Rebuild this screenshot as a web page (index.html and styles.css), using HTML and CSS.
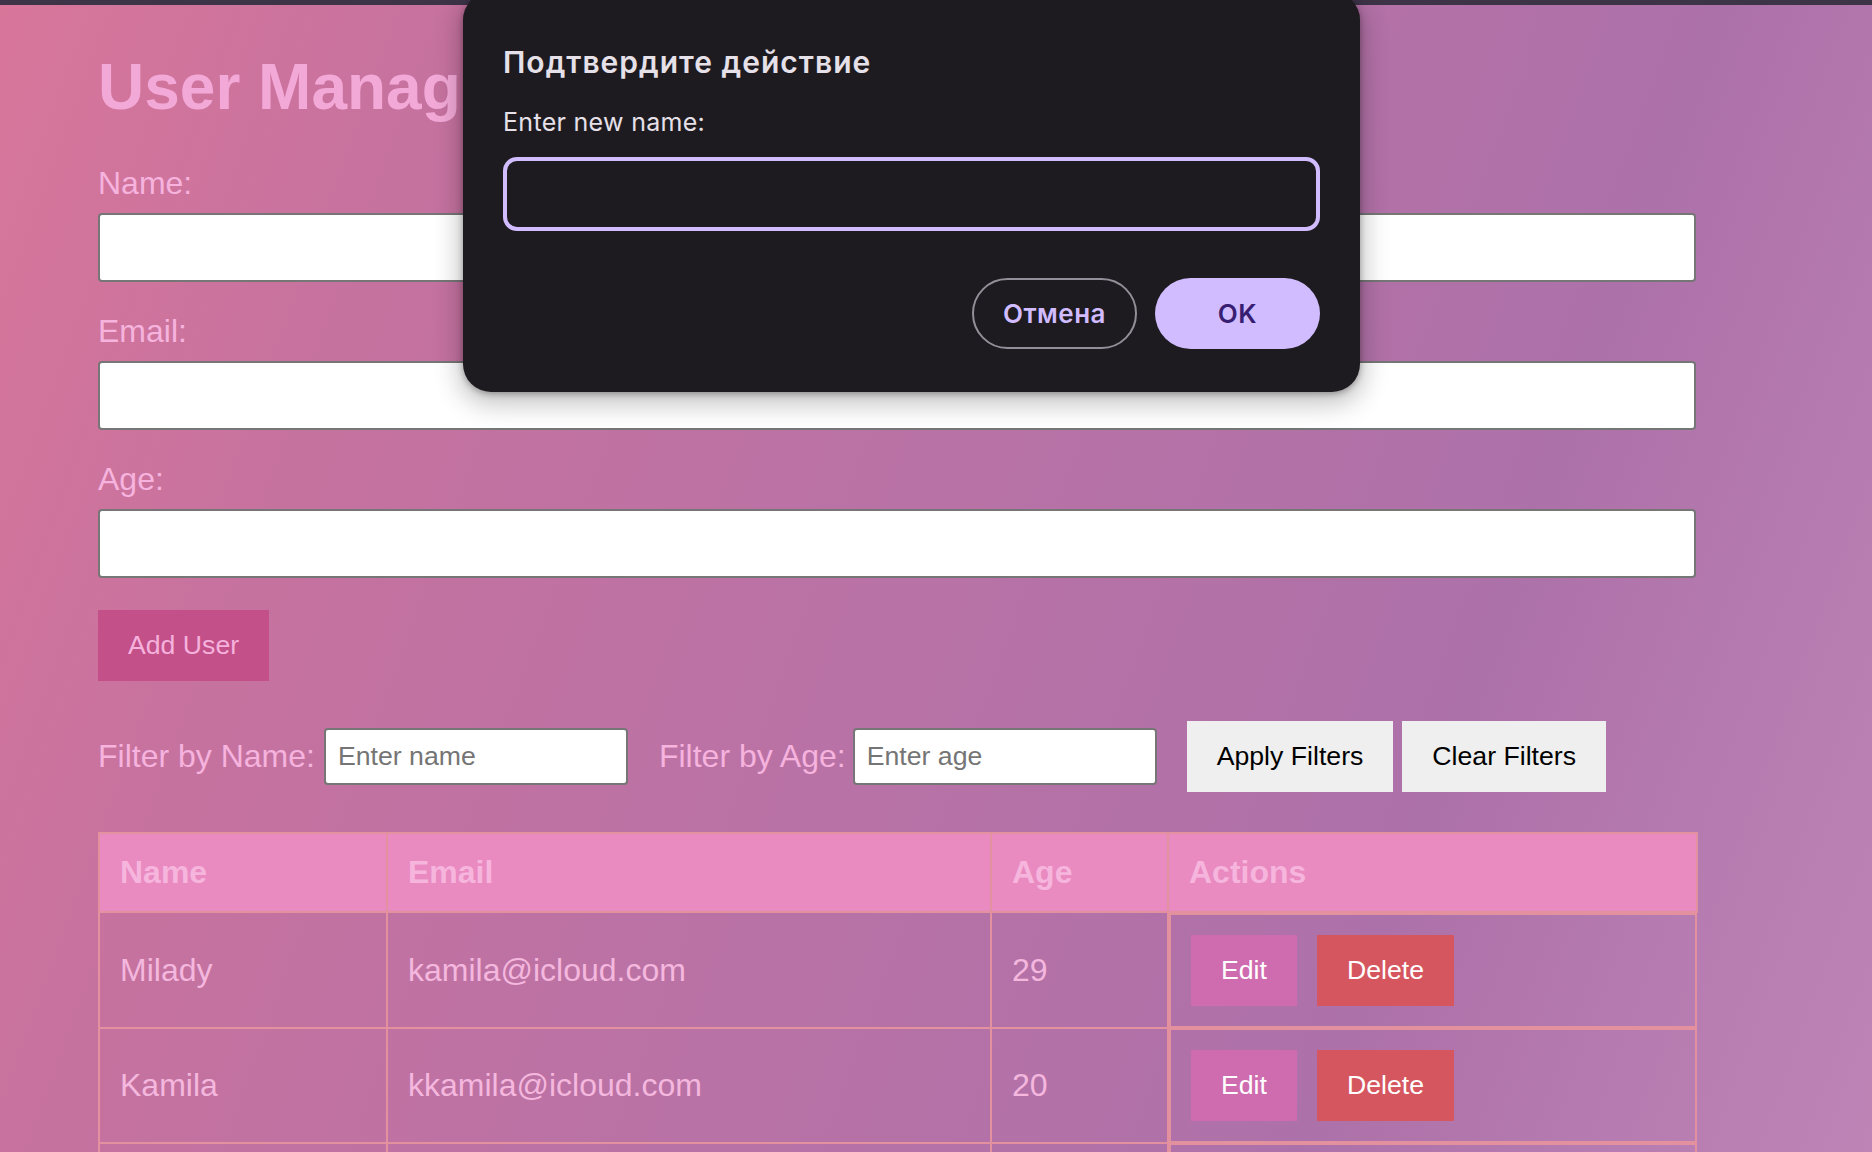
FILE: index.html
```html
<!DOCTYPE html>
<html lang="en">
<head>
<meta charset="utf-8">
<title>User Management</title>
<link rel="stylesheet" href="styles.css">
</head>
<body>
<div class="topbar"></div>
<main class="page">
  <h1 class="title">User Management</h1>
  <form class="user-form">
    <label class="field-label" for="name">Name:</label>
    <input class="field-input" id="name" type="text">
    <label class="field-label" for="email">Email:</label>
    <input class="field-input" id="email" type="email">
    <label class="field-label" for="age">Age:</label>
    <input class="field-input field-input-last" id="age" type="number">
    <button class="btn btn-add" type="button">Add User</button>
  </form>

  <div class="filters">
    <label class="filter-label filter-label-name" for="fname">Filter by Name:</label>
    <input class="filter-input filter-input-name" id="fname" type="text" placeholder="Enter name">
    <label class="filter-label filter-label-age" for="fage">Filter by Age:</label>
    <input class="filter-input filter-input-age" id="fage" type="text" placeholder="Enter age">
    <button class="btn btn-light btn-apply" type="button">Apply Filters</button>
    <button class="btn btn-light" type="button">Clear Filters</button>
  </div>

  <table class="users">
    <colgroup>
      <col class="col-name">
      <col class="col-email">
      <col class="col-age">
      <col class="col-actions">
    </colgroup>
    <thead>
      <tr><th>Name</th><th>Email</th><th>Age</th><th>Actions</th></tr>
    </thead>
    <tbody>
      <tr>
        <td>Milady</td><td>kamila@icloud.com</td><td>29</td>
        <td class="actions"><button class="btn btn-edit" type="button">Edit</button><button class="btn btn-delete" type="button">Delete</button></td>
      </tr>
      <tr>
        <td>Kamila</td><td>kkamila@icloud.com</td><td>20</td>
        <td class="actions"><button class="btn btn-edit" type="button">Edit</button><button class="btn btn-delete" type="button">Delete</button></td>
      </tr>
      <tr>
        <td>Anna</td><td>anna@icloud.com</td><td>25</td>
        <td class="actions"><button class="btn btn-edit" type="button">Edit</button><button class="btn btn-delete" type="button">Delete</button></td>
      </tr>
    </tbody>
  </table>
</main>

<div class="dialog" role="dialog" aria-modal="true">
  <h2 class="dialog-title">Подтвердите действие</h2>
  <p class="dialog-text">Enter new name:</p>
  <input class="dialog-input" type="text">
  <div class="dialog-actions">
    <button class="dbtn dbtn-cancel" type="button">Отмена</button>
    <button class="dbtn dbtn-ok" type="button">OK</button>
  </div>
</div>
</body>
</html>
```

FILE: styles.css
```css
* {
  box-sizing: border-box;
}

html, body {
  margin: 0;
  height: 100%;
}

body {
  position: relative;
  overflow: hidden;
  font-family: "Liberation Sans", Arial, Helvetica, sans-serif;
  background: linear-gradient(110deg, #d8769a 0%, #c6729f 20%, #b872a6 50%, #ad71a9 75%, #be84b6 100%);
}

.topbar {
  height: 5px;
  background: #3d3448;
}

.page {
  width: 1598px;
  margin-left: 98px;
  padding-top: 45px;
}

.title {
  margin: 0;
  font-size: 64px;
  line-height: 74px;
  font-weight: bold;
  color: #f2a9d7;
}

.user-form {
  margin-top: 41px;
  display: flex;
  flex-direction: column;
  align-items: flex-start;
}

.field-label {
  font-size: 32px;
  line-height: 37px;
  color: #f5b3de;
  margin-bottom: 11px;
}

.field-input {
  width: 100%;
  height: 69px;
  margin: 0 0 31px;
  border: 2px solid #767676;
  border-radius: 4px;
  background: #fff;
}

.field-input-last {
  margin-bottom: 32px;
}

.btn {
  font-family: "Liberation Sans", Arial, Helvetica, sans-serif;
  font-size: 26.67px;
  line-height: 31px;
  padding: 20px 30px;
  border: none;
  border-radius: 0;
  cursor: pointer;
}

.btn-add {
  background: #c45089;
  color: #f5b2dd;
}

.filters {
  margin-top: 40px;
  display: flex;
  align-items: center;
}

.filter-label {
  font-size: 32px;
  line-height: 37px;
  color: #f5b3de;
}

.filter-label-name {
  margin-right: 9px;
}

.filter-label-age {
  margin-right: 7px;
}

.filter-input {
  width: 304px;
  height: 57px;
  padding: 0 12px;
  border: 2px solid #767676;
  border-radius: 4px;
  background: #fff;
  font-family: "Liberation Sans", Arial, Helvetica, sans-serif;
  font-size: 26.67px;
  color: #000;
}

.filter-input::placeholder {
  color: #757575;
}

.filter-input-name {
  margin-right: 31px;
}

.filter-input-age {
  margin-right: 30px;
}

.btn-light {
  background: #efefef;
  color: #000;
}

.btn-apply {
  margin-right: 9px;
}

.users {
  margin-top: 40px;
  width: 1598px;
  border-collapse: collapse;
  table-layout: fixed;
}

.col-name { width: 288px; }
.col-email { width: 604px; }
.col-age { width: 177px; }
.col-actions { width: 529px; }

.users th,
.users td {
  border: 2px solid #e3919f;
  padding: 20px;
  text-align: left;
  font-size: 32px;
  line-height: 37px;
}

.users th {
  background: #e98ac1;
  color: #f6b5dd;
  font-weight: bold;
}

.users td {
  color: #f4b7de;
}

.users td.actions {
  display: flex;
  gap: 20px;
}

.btn-edit {
  background: #cf6baf;
  color: #fff;
}

.btn-delete {
  background: #d6565f;
  color: #fff;
}

.dialog {
  position: absolute;
  left: 463px;
  top: -8px;
  width: 897px;
  padding: 52px 40px 43px;
  background: #1d1b20;
  border-radius: 28px;
  box-shadow: 0 8px 26px 4px rgba(0, 0, 0, 0.24), 0 2px 6px rgba(0, 0, 0, 0.3);
  font-family: Inter, Roboto, "Noto Sans", sans-serif;
  z-index: 10;
}

.dialog-title {
  margin: 0;
  font-size: 30px;
  line-height: 36px;
  font-weight: 600;
  letter-spacing: 1px;
  color: #e6e0e9;
}

.dialog-text {
  margin: 27px 0 0;
  font-size: 25px;
  line-height: 30px;
  letter-spacing: 0.3px;
  color: #e6e0e9;
}

.dialog-input {
  display: block;
  margin-top: 20px;
  width: 100%;
  height: 74px;
  border: 4px solid #d0bcff;
  border-radius: 14px;
  background: transparent;
}

.dialog-actions {
  margin-top: 47px;
  display: flex;
  justify-content: flex-end;
  gap: 18px;
}

.dbtn {
  width: 165px;
  height: 71px;
  border-radius: 36px;
  font-family: Inter, Roboto, "Noto Sans", sans-serif;
  font-size: 26px;
  font-weight: 600;
  letter-spacing: 0.5px;
  cursor: pointer;
}

.dbtn-cancel {
  background: transparent;
  border: 2px solid #938f99;
  color: #d0bcff;
}

.dbtn-ok {
  background: #d0bcff;
  border: none;
  color: #381e72;
}
```
